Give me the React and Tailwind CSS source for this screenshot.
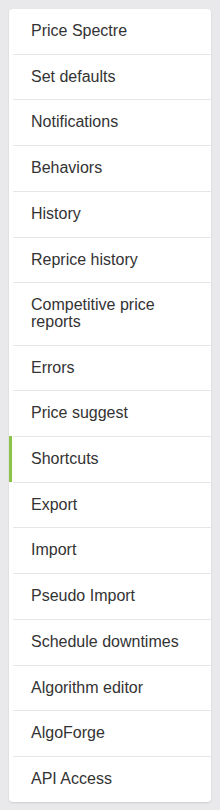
import React from "react";

const items = [
  "Price Spectre",
  "Set defaults",
  "Notifications",
  "Behaviors",
  "History",
  "Reprice history",
  "Competitive price reports",
  "Errors",
  "Price suggest",
  "Shortcuts",
  "Export",
  "Import",
  "Pseudo Import",
  "Schedule downtimes",
  "Algorithm editor",
  "AlgoForge",
  "API Access",
];

const active = "Shortcuts";

export default function App() {
  return (
    <div className="min-h-[810px] bg-[#e9e9eb] p-[9px] font-['Liberation_Sans',Arial,sans-serif]">
      <ul className="w-[202px] rounded-[4px] bg-white shadow-[0_1px_2px_rgba(0,0,0,0.12)]">
        {items.map((label, i) => (
          <li
            key={label}
            className={
              label === active
                ? "border-l-[3px] border-[#8bc34a] pl-px"
                : "pl-1"
            }
          >
            <a
              href="#"
              className={
                "block py-[14px] pl-[18px] pr-3 text-[16px] leading-[16.7px] text-[#333]" +
                (i === 0 ? "" : " border-t border-[#e6e6e6]")
              }
            >
              {label}
            </a>
          </li>
        ))}
      </ul>
    </div>
  );
}
